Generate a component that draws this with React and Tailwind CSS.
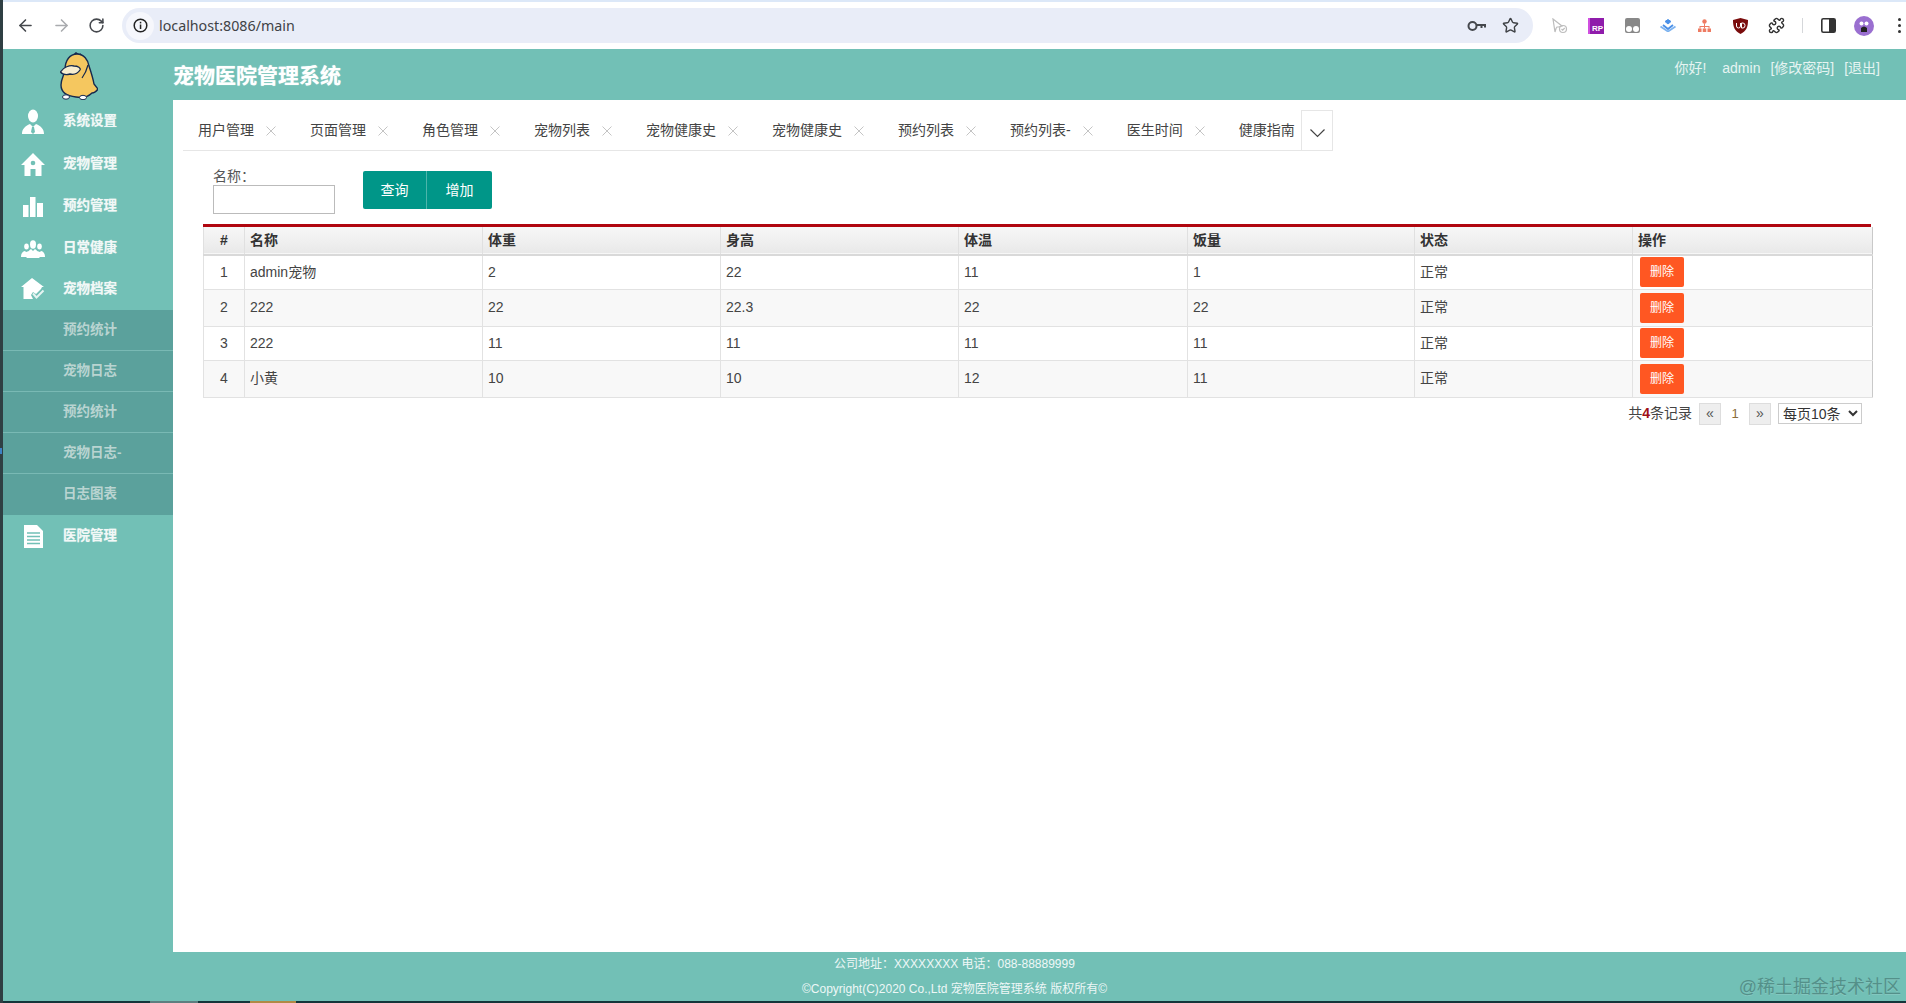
import React from 'react';
import { ArrowLeft, ArrowRight, RotateCw, Star, Puzzle } from 'lucide-react';

const FONT = "font-['Liberation_Sans','Noto_Sans_CJK_SC',sans-serif]";

// Sidebar icons
const UserTie = () => (
  <svg width="24" height="26" viewBox="0 0 24 26" fill="#fff">
    <ellipse cx="12" cy="7" rx="5" ry="6.500" />
    <path d="M1 25c0-5 3-8 8-10l3 3 3-3c5 2 8 5 8 10z" />
    <path d="M11 18h2l1 5-2 2-2-2z" fill="#72c0b6" />
  </svg>
);
const House = () => (
  <svg width="24" height="23" viewBox="0 0 24 23" fill="#fff">
    <path d="M12 0 0 12h3.500v11H9.500v-7h5v7h6V12H24z" />
    <circle cx="12" cy="10" r="2.300" fill="#72c0b6" />
  </svg>
);
const Bars = () => (
  <svg width="20" height="20" viewBox="0 0 20 20" fill="#fff">
    <rect x="0" y="8" width="5.500" height="12" />
    <rect x="7" y="0" width="5.500" height="20" />
    <rect x="14" y="6" width="6" height="14" />
  </svg>
);
const Group = () => (
  <svg width="24" height="18" viewBox="0 0 24 18" fill="#fff">
    <ellipse cx="5.500" cy="6.500" rx="2.300" ry="3" />
    <ellipse cx="18.500" cy="6.500" rx="2.300" ry="3" />
    <path d="M0 17c0-3 1-5 3.500-6l2 1 2-1 3 6z" />
    <path d="M24 17c0-3-1-5-3.500-6l-2 1-2-1-3 6z" />
    <ellipse cx="12" cy="4.500" rx="3" ry="4.200" />
    <path d="M5.500 18c0-5 2.500-8 4.500-9l2 2 2-2c2 1 4.500 4 4.500 9z" />
  </svg>
);
const HouseCheck = () => (
  <svg width="24" height="23" viewBox="0 0 24 23" fill="#fff">
    <path d="M11 0 0 9h2.500v12h9.500l-2-4 2-3 3 2 5-5 1-2h2z" />
    <path d="M12 15.500l3.500 4 7-7" fill="none" stroke="#e6f4f2" strokeWidth="2" />
  </svg>
);
const Doc = () => (
  <svg width="19" height="23" viewBox="0 0 19 23">
    <path d="M0 0h13l6 6v17H0z" fill="#fff" />
    <path d="M3 8h13M3 11.500h13M3 15h13M3 18.500h13" stroke="#72c0b6" strokeWidth="1.300" />
  </svg>
);

const Duck = () => (
  <svg width="38" height="48" viewBox="0 0 38 48">
    <path d="M14 3l2-2 3 2 2-1" fill="none" stroke="#16294d" strokeWidth="1.600" />
    <path d="M5 18C5 8 10 2 17 2s11 6 12 12c2 6 4 12 5 18l4 5c-2 3-4 4-6 4-4 4-10 5-16 4C7 44 1 40 1 33c0-6 3-9 4-15z" fill="#f5c75f" stroke="#16294d" strokeWidth="1.400" />
    <path d="M0.500 20C3 15 10 13 14 14c4 0 7 2 6 4-2 3-6 5-10 4-4 1-8 0-9.500-2z" fill="#f7edcf" stroke="#16294d" strokeWidth="1.300" />
    <path d="M22 26c3-4 5-9 6-13" fill="none" stroke="#16294d" strokeWidth="1.200" />
    <ellipse cx="6" cy="45" rx="3.500" ry="2.200" fill="#fff" stroke="#16294d" />
    <ellipse cx="23" cy="45.500" rx="3.500" ry="2.200" fill="#fff" stroke="#16294d" />
  </svg>
);

// Toolbar extension icons
const KeyIcon = () => (
  <svg width="19" height="12" viewBox="0 0 19 12" fill="none" stroke="#45484d" strokeWidth="2">
    <circle cx="5.500" cy="6" r="4" />
    <path d="M9.500 5h8.500v2.500M14.500 5v3" />
  </svg>
);
const InfoIcon = () => (
  <svg width="15" height="15" viewBox="0 0 15 15">
    <circle cx="7.500" cy="7.500" r="6.300" fill="none" stroke="#222" strokeWidth="1.500" />
    <rect x="6.800" y="6.500" width="1.500" height="4.500" fill="#222" />
    <rect x="6.800" y="3.800" width="1.500" height="1.600" fill="#222" />
  </svg>
);
const CursorExt = () => (
  <svg width="16" height="16" viewBox="0 0 16 16" fill="none" stroke="#bdbdbd" strokeWidth="1.200">
    <path d="M1 1l9 7-3.500 1-1.500 0-1 1.500L3 14z" />
    <circle cx="11" cy="11" r="3.500" />
    <path d="M9.500 11l1.200 1.200 2-2.200" />
  </svg>
);
const RpExt = () => (
  <div className="flex h-[16px] w-[16px] items-end justify-end border-l-2 border-l-[#d04fe0] bg-[#8f1cab] pr-[1px] font-['Liberation_Sans'] text-[8px] font-bold leading-[10px] text-white">
    RP
  </div>
);
const GlassesExt = () => (
  <svg width="15" height="15" viewBox="0 0 15 15">
    <path d="M0 9V2q0-2 2-2h11q2 0 2 2v7z" fill="#888" />
    <rect x="0" y="7" width="15" height="8" rx="2" fill="#888" />
    <circle cx="4" cy="11" r="3" fill="#fff" />
    <circle cx="11" cy="11" r="3" fill="#fff" />
  </svg>
);
const LayersExt = () => (
  <svg width="16" height="13" viewBox="0 0 16 13" fill="none" strokeWidth="1.800">
    <path d="M3 6l5 4 5-4" stroke="#4a90e8" />
    <path d="M0.500 7.500L8 12.500l7.500-5" stroke="#7db3ef" />
    <path d="M5 2.500l3 2.500 3-2.500L8 0.500z" fill="#4a90e8" stroke="#4a90e8" strokeWidth="1" />
  </svg>
);
const OrgExt = () => (
  <svg width="13" height="13" viewBox="0 0 13 13" fill="#ee7b62">
    <circle cx="6.500" cy="2.500" r="2.200" />
    <rect x="0" y="9.500" width="3.500" height="3.500" />
    <rect x="4.750" y="9.500" width="3.500" height="3.500" />
    <rect x="9.500" y="9.500" width="3.500" height="3.500" />
    <path d="M6 4.500h1v2.500h4.500v2.500h-1V8H7v1.500H6V8H2.500v1.500h-1V7H6z" />
  </svg>
);
const ShieldExt = () => (
  <svg width="15" height="16" viewBox="0 0 15 16">
    <path d="M7.500 0 15 2c0 7-1.500 11-7.500 14C1.500 13 0 9 0 2z" fill="#7a0c0c" />
    <path d="M3.500 5v3q0 2 2 2t2-2V5M8.500 5v5h1.500q2 0 2-2.500T10 5z" fill="none" stroke="#fff" strokeWidth="1" />
  </svg>
);
const PanelIcon = () => (
  <svg width="15" height="15" viewBox="0 0 15 15">
    <rect x="0.800" y="0.800" width="13.400" height="13.400" rx="1.500" fill="#fff" stroke="#333" strokeWidth="1.600" />
    <rect x="8" y="1" width="6" height="13" fill="#333" />
  </svg>
);
const Avatar = () => (
  <svg width="20" height="20" viewBox="0 0 20 20">
    <circle cx="10" cy="10" r="10" fill="#9a6fd0" />
    <circle cx="7.500" cy="7.500" r="2" fill="#fff" />
    <circle cx="12.500" cy="7.500" r="2" fill="#fff" />
    <path d="M7 16v-4q3-3 6 0v4z" fill="#222" />
  </svg>
);

const EXTENSIONS = [CursorExt, RpExt, GlassesExt, LayersExt, OrgExt, ShieldExt];

const Toolbar = () => (
  <div className="h-[49px] shrink-0 border-t-[2px] border-t-[#dce8f8] bg-white">
    <div className="flex h-[47px] items-center">
      <div className="flex w-[119px] items-center gap-[17px] pl-[13px]">
        <ArrowLeft size={19} color="#45484d" strokeWidth={2} />
        <ArrowRight size={19} color="#a9abae" strokeWidth={2} />
        <RotateCw size={17} color="#45484d" strokeWidth={2.200} />
      </div>
      <div className="flex h-[35px] w-[1411px] items-center rounded-full bg-[#e9edf8] pl-[4px] pr-[14px]">
        <div className="flex h-[28px] w-[28px] items-center justify-center rounded-full bg-[#f6f7fc]">
          <InfoIcon />
        </div>
        <span className="ml-[5px] font-['Noto_Sans',sans-serif] text-[14.250px] text-[#3f4246]">localhost:8086/main</span>
        <div className="ml-auto flex items-center gap-[16px]">
          <KeyIcon />
          <Star size={17} color="#3f4246" strokeWidth={2} />
        </div>
      </div>
      <div className="flex w-[373px] shrink-0 items-center pl-[9px]">
        {EXTENSIONS.map((Icon, i) => (
          <div key={i} className="flex w-[36px] justify-center"><Icon /></div>
        ))}
        <div className="flex w-[36px] justify-center">
          <Puzzle size={17} color="#333" strokeWidth={2} />
        </div>
        <div className="flex w-[16px] justify-center">
          <div className="h-[15px] w-[1px] bg-[#d5d7da]" />
        </div>
        <div className="flex w-[36px] justify-center pl-[1px]"><PanelIcon /></div>
        <div className="flex w-[36px] justify-center"><Avatar /></div>
        <div className="ml-[16px] flex flex-col gap-[3px]">
          <div className="h-[3px] w-[3px] rounded-full bg-[#333]" />
          <div className="h-[3px] w-[3px] rounded-full bg-[#333]" />
          <div className="h-[3px] w-[3px] rounded-full bg-[#333]" />
        </div>
      </div>
    </div>
  </div>
);

const NavItem = ({ icon: Icon, label, h }) => (
  <div className={`flex items-center ${h}`}>
    <div className="flex w-[60px] shrink-0 justify-center">
      <Icon />
    </div>
    <span className="text-[13.500px] font-bold text-[#f2f8f7] [text-shadow:0_0_1px_rgba(255,255,255,0.5)]">{label}</span>
  </div>
);

const SubItem = ({ label }) => (
  <div className="flex h-[41px] items-center border-b border-b-[#79b9b4] pl-[60px] text-[13.500px] font-bold text-[#b9d4d1] last:border-b-0">
    {label}
  </div>
);

const Sidebar = () => (
  <div className="w-[170px] shrink-0">
    <div className="flex h-[51px] items-end pl-[57px]">
      <Duck />
    </div>
    <NavItem icon={UserTie} label="系统设置" h="h-[43px]" />
    <NavItem icon={House} label="宠物管理" h="h-[42px]" />
    <NavItem icon={Bars} label="预约管理" h="h-[43px]" />
    <NavItem icon={Group} label="日常健康" h="h-[41px]" />
    <NavItem icon={HouseCheck} label="宠物档案" h="h-[41px]" />
    <div className="bg-[#5ba19c]">
      <SubItem label="预约统计" />
      <SubItem label="宠物日志" />
      <SubItem label="预约统计" />
      <SubItem label="宠物日志-" />
      <SubItem label="日志图表" />
    </div>
    <NavItem icon={Doc} label="医院管理" h="h-[42px]" />
  </div>
);

const CloseX = () => (
  <svg width="10" height="10" viewBox="0 0 10 10" stroke="#c4c4c4" strokeWidth="1">
    <path d="M0.500 0.500l9 9M9.500 0.500l-9 9" />
  </svg>
);

const TABS = ['用户管理', '页面管理', '角色管理', '宠物列表', '宠物健康史', '宠物健康史', '预约列表', '预约列表-', '医生时间'];

const Tabs = () => (
  <div className="ml-[10px] mt-[10px] flex h-[41px] w-[1150px] border-b border-b-[#e6e6e6]">
    {TABS.map((t, i) => (
      <div key={i} className="flex h-[40px] items-center pl-[15px] pr-[19px] text-[14px] text-[#444]">
        <span>{t}</span>
        <span className="ml-[12px] mt-[1px]"><CloseX /></span>
      </div>
    ))}
    <div className="flex h-[40px] w-[62px] items-center pl-[15px] text-[14px] text-[#444]">
      <span className="shrink-0">健康指南</span>
    </div>
    <div className="ml-auto flex h-[41px] w-[32px] items-center justify-center border border-b-0 border-[#e6e6e6] pt-[4px]">
      <svg width="15" height="9" viewBox="0 0 15 9" fill="none" stroke="#444" strokeWidth="1.200">
        <path d="M0.500 0.500l7 7 7-7" />
      </svg>
    </div>
  </div>
);

const Filter = () => (
  <div className="ml-[40px] mt-[20px] flex items-start">
    <div className="w-[122px]">
      <div className="mt-[-4px] h-[18px] text-[14px] leading-[18px] text-[#555]">{'名称\uFF1A'}</div>
      <input className="block h-[29px] w-[122px] border border-[#bbb] bg-white" />
    </div>
    <div className="ml-[28px] flex h-[38px] overflow-hidden rounded-[2px] bg-[#009688] text-[14px] text-white">
      <div className="flex w-[64px] items-center justify-center border-r border-r-[#4db5ab]">查询</div>
      <div className="flex w-[65px] items-center justify-center">增加</div>
    </div>
  </div>
);

const COLS = ['w-[41px]', 'w-[238px]', 'w-[238px]', 'w-[238px]', 'w-[229px]', 'w-[227px]', 'w-[218px]', 'w-[240px]'];
const HEAD = ['#', '名称', '体重', '身高', '体温', '饭量', '状态', '操作'];
const ROWS = [
  { h: 'h-[34px]', bg: 'bg-white', cells: ['1', 'admin宠物', '2', '22', '11', '1'] },
  { h: 'h-[37px]', bg: 'bg-[#f8f8f8]', cells: ['2', '222', '22', '22.3', '22', '22'] },
  { h: 'h-[34px]', bg: 'bg-white', cells: ['3', '222', '11', '11', '11', '11'] },
  { h: 'h-[37px]', bg: 'bg-[#f8f8f8]', cells: ['4', '小黄', '10', '10', '12', '11'] },
];

const DataTable = () => (
  <div className="ml-[30px] mr-[35px] mt-[10px] border-t-[3px] border-t-[#b0060f]">
    <table className="w-full table-fixed border-collapse border border-t-0 border-[#c9c9c9] text-[14px] text-[#444]">
      <colgroup>
        {COLS.map((c, i) => <col key={i} className={c} />)}
      </colgroup>
      <thead>
        <tr className="h-[28px] border-b-2 border-b-[#d9d9d9] bg-gradient-to-b from-[#f7f7f7] to-[#e9e9e9]">
          {HEAD.map((h, i) => (
            <th key={i} className={`border-l border-l-[#e0e0e0] px-[5px] font-bold text-[#333] ${i === 0 ? 'text-center' : 'text-left'}`}>{h}</th>
          ))}
        </tr>
      </thead>
      <tbody>
        {ROWS.map((r, i) => (
          <tr key={i} className={`${r.h} ${r.bg} border-b border-b-[#e2e2e2]`}>
            {r.cells.map((c, j) => (
              <td key={j} className={`border-l border-l-[#e2e2e2] px-[5px] ${j === 0 ? 'text-center' : ''}`}>{c}</td>
            ))}
            <td className="border-l border-l-[#e2e2e2] px-[5px]">正常</td>
            <td className="border-l border-l-[#e2e2e2] pl-[7px]">
              <div className="flex h-[30px] w-[44px] items-center justify-center rounded-[2px] bg-[#ff5722] text-[12px] text-white">删除</div>
            </td>
          </tr>
        ))}
      </tbody>
    </table>
  </div>
);

const Pager = () => (
  <div className="mr-[44px] mt-[5px] flex items-center justify-end text-[14px] text-[#444]">
    <span>共<b className="text-[#a01018]">4</b>条记录</span>
    <div className="ml-[7px] flex h-[22px] w-[22px] items-center justify-center border border-[#ddd] bg-[#eee] text-[14px] text-[#555]">«</div>
    <span className="w-[28px] text-center text-[13px] text-[#8a6d3b]">1</span>
    <div className="flex h-[22px] w-[22px] items-center justify-center border border-[#ddd] bg-[#eee] text-[14px] text-[#555]">»</div>
    <select className="ml-[7px] h-[21px] w-[84px] border border-[#ccc] bg-white text-[14px] text-[#333]" defaultValue="10">
      <option value="10">每页10条</option>
      <option value="20">每页20条</option>
    </select>
  </div>
);

export default function App() {
  return (
    <div className={`flex h-screen w-full overflow-hidden ${FONT}`}>
      {/* strip of the window behind */}
      <div className="flex w-[3px] shrink-0 flex-col bg-[#2f3f43] pt-[448px]">
        <div className="h-[6px] w-[2px] bg-[#3d82c4]" />
      </div>
      <div className="relative flex min-w-0 flex-1 flex-col">
        <Toolbar />
        <div className="flex min-h-0 flex-1 flex-col bg-[#72c0b6]">
          <div className="flex min-h-0 flex-1">
            <Sidebar />
            <div className="flex min-w-0 flex-1 flex-col">
              <div className="flex h-[51px] shrink-0 justify-between pr-[26px]">
                <div className="pt-[14px] text-[21px] font-bold leading-[26px] text-white [text-shadow:0_0_1px_rgba(255,255,255,0.7)]">宠物医院管理系统</div>
                <div className="flex gap-[10px] pt-[10px] text-[14px] leading-[18px] text-[#e6f4f2]">
                  <span className="mr-[6px]">你好!</span>
                  <span>admin</span>
                  <span>[修改密码]</span>
                  <span>[退出]</span>
                </div>
              </div>
              <div className="min-h-0 flex-1 bg-white">
                <Tabs />
                <Filter />
                <DataTable />
                <Pager />
              </div>
            </div>
          </div>
          <div className="h-[49px] shrink-0 pt-[3px] text-center text-[12px] text-[#eef7f6]">
            <div className="h-[18px] leading-[18px]">{'公司地址\uFF1AXXXXXXXX 电话\uFF1A088-88889999'}</div>
            <div className="mt-[7px] h-[18px] leading-[18px]">©Copyright(C)2020 Co.,Ltd 宠物医院管理系统 版权所有©</div>
          </div>
          {/* taskbar edge at the very bottom of the capture */}
          <div className="flex h-[2px] shrink-0 bg-[#14353a]">
            <div className="ml-[147px] w-[48px] bg-[#5d7f80]" />
            <div className="ml-[52px] w-[46px] bg-[#b08a45]" />
          </div>
        </div>
        <span className="absolute bottom-[2px] right-[5px] text-[18px] text-[#549089] [text-shadow:0_1px_0_rgba(255,255,255,0.15)]">@稀土掘金技术社区</span>
      </div>
    </div>
  );
}
